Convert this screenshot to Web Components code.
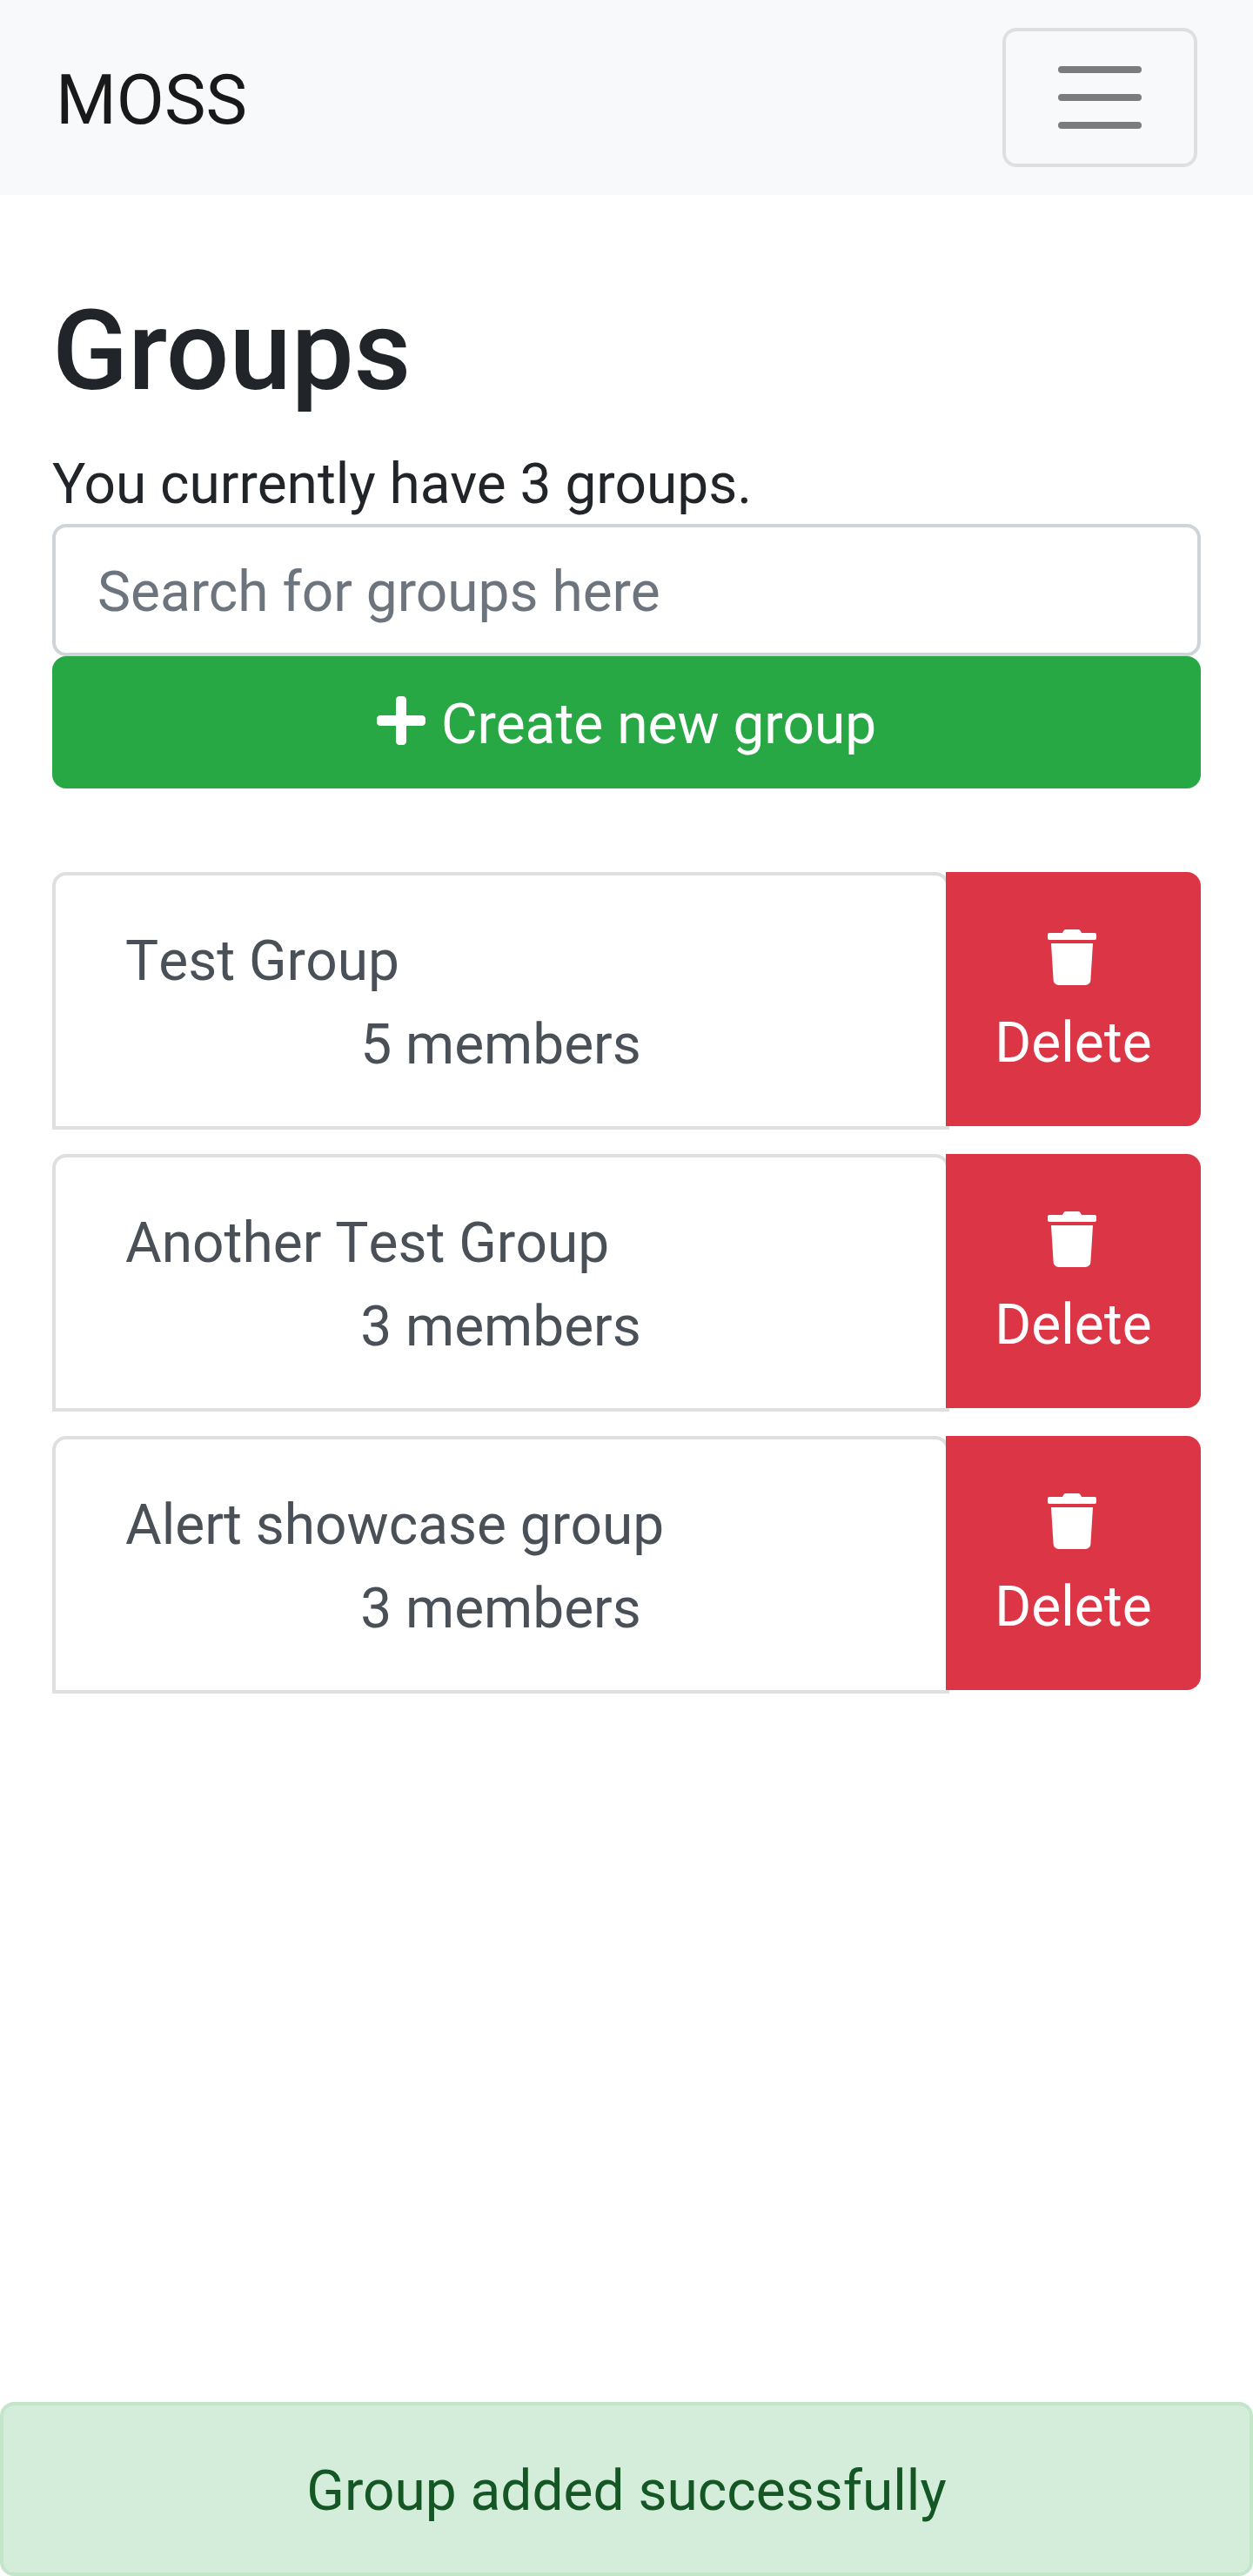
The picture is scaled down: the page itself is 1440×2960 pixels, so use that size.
<!DOCTYPE html>
<html lang="en">
<head>
<meta charset="utf-8">
<title>MOSS</title>
<style>
html{font-size:64px}
body{margin:0;background:#fff;font-family:Roboto,"Liberation Sans",sans-serif;font-size:1rem;line-height:1.5;color:#212529}
</style>
</head>
<body>
<moss-app></moss-app>
<script>
// .line is a single text row whose baseline sits --base below its top edge.
const base = `<style>
*,:host{box-sizing:border-box}
.line{display:block;height:96px;line-height:0;white-space:nowrap}
.line::before{content:"";display:inline-block;width:0;height:var(--base,72px)}
</style>`;
const define = (name, html, setup) => customElements.define(name, class extends HTMLElement {
  constructor() {
    super();
    this.attachShadow({ mode: 'open' }).innerHTML = base + html;
  }
  connectedCallback() { if (setup) setup(this); }
});

define('moss-navbar', `
<style>
:host{display:flex;align-items:center;justify-content:space-between;height:224px;padding:32px 64px;background:#f8f9fa}
.brand{--base:90px;height:120px;font-size:80px;color:rgba(0,0,0,.9)}
button{display:flex;align-items:center;justify-content:center;width:224px;height:160px;padding:0;border:4px solid rgba(0,0,0,.1);border-radius:16px;background:none}
svg{width:120px;height:120px;display:block}
</style>
<span class="line brand"><slot></slot></span>
<button aria-label="Toggle navigation"><svg viewBox="0 0 30 30"><path stroke="rgba(0,0,0,.5)" stroke-width="2" stroke-linecap="round" stroke-miterlimit="10" d="M4 7h22M4 15h22M4 23h22"/></svg></button>`);

define('moss-icon', `
<style>
:host{display:block;flex:none;width:56px;height:64px}
svg{display:block;width:56px;height:64px}
</style>
<svg viewBox="0 0 448 512"><path fill="currentColor"/></svg>`, el => {
  const shapes = {
    plus: 'M416 208H272V64c0-17.67-14.33-32-32-32h-32c-17.67 0-32 14.33-32 32v144H32c-17.67 0-32 14.33-32 32v32c0 17.67 14.33 32 32 32h144v144c0 17.67 14.33 32 32 32h32c17.67 0 32-14.33 32-32V304h144c17.67 0 32-14.33 32-32v-32c0-17.67-14.33-32-32-32z',
    trash: 'M432 32H312l-9.4-18.7A24 24 0 0 0 281.1 0H166.8a23.72 23.72 0 0 0-21.4 13.3L136 32H16A16 16 0 0 0 0 48v32a16 16 0 0 0 16 16h416a16 16 0 0 0 16-16V48a16 16 0 0 0-16-16zM53.2 467a48 48 0 0 0 47.9 45h245.8a48 48 0 0 0 47.9-45L416 128H32z'
  };
  el.shadowRoot.querySelector('path').setAttribute('d', shapes[el.getAttribute('name')]);
});

define('moss-search', `
<style>
:host{display:block;height:152px}
input{display:block;width:100%;height:152px;margin:0;padding:26.5px 48px 21.5px;border:4px solid #ced4da;border-radius:16px;background:#fff;font:inherit;line-height:96px;color:#495057}
input::placeholder{color:#6c757d;opacity:1}
</style>
<input type="text" placeholder="Search for groups here">`);

define('moss-create-button', `
<style>
:host{display:block}
button{display:flex;align-items:flex-start;justify-content:center;gap:18px;width:100%;height:152px;margin:0;padding:28px 52px;border:0;border-radius:16px;background:#28a745;color:#fff;font:inherit}
moss-icon{margin-top:14px}
</style>
<button><moss-icon name="plus"></moss-icon><span class="line"><slot></slot></span></button>`);

define('moss-group', `
<style>
:host{display:flex;align-items:flex-start;height:296px}
.item{flex:none;width:1031px;height:296px;padding:48px 80px;border:4px solid rgba(0,0,0,.125);border-radius:16px 16px 0 0;background:#fff;color:#495057}
.name{font-kerning:none}
.members{text-align:center}
button{flex:1;display:flex;flex-direction:column;align-items:center;justify-content:flex-start;height:292px;margin:0 0 0 -4px;padding:66px 0 0;border:0;border-radius:0 16px 16px 0;background:#dc3545;color:#fff;font:inherit;z-index:1}
moss-icon{margin:0 3px 16px 0}
</style>
<div class="item"><div class="line name"><slot name="name"></slot></div><div class="line members"><slot name="members"></slot></div></div>
<button><moss-icon name="trash"></moss-icon><span class="line">Delete</span></button>`);

define('moss-alert', `
<style>
:host{display:block;height:200px;padding:48px 80px;border:4px solid #c3e6cb;border-radius:16px;background:#d4edda;color:#155724;text-align:center}
</style>
<div class="line"><slot></slot></div>`);

define('moss-app', `
<style>
:host{display:flex;flex-direction:column;height:2960px}
main{flex:1;padding:96px 60px 0}
h1{--base:127px;margin:0 0 32px;font-size:128px;font-weight:500}
h1.line{height:154px}
p{margin:0}
.list{display:flex;flex-direction:column;gap:28px;margin-top:96px}
</style>
<moss-navbar>MOSS</moss-navbar>
<main>
<h1 class="line">Groups</h1>
<p class="line">You currently have 3 groups.</p>
<moss-search></moss-search>
<moss-create-button>Create new group</moss-create-button>
<div class="list">
<moss-group><span slot="name">Test Group</span><span slot="members">5 members</span></moss-group>
<moss-group><span slot="name">Another Test Group</span><span slot="members">3 members</span></moss-group>
<moss-group><span slot="name">Alert showcase group</span><span slot="members">3 members</span></moss-group>
</div>
</main>
<moss-alert>Group added successfully</moss-alert>`);
</script>
</body>
</html>
